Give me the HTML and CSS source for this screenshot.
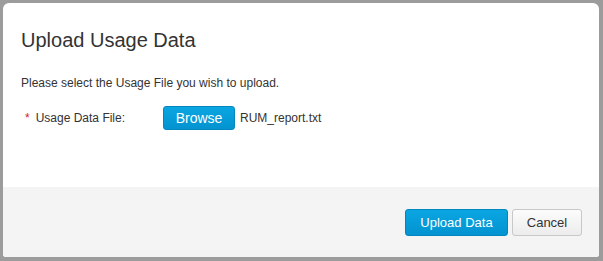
FILE: index.html
```html
<!DOCTYPE html>
<html lang="en">
<head>
    <meta charset="UTF-8">
    <meta name="viewport" content="width=device-width, initial-scale=1.0">
    <title>Upload Usage Data</title>
    <link rel="stylesheet" href="styles.css">
</head>
<body>
    <div class="modal">
        <!-- 內容區塊 -->
        <div class="modal-body">
            <h1 class="modal-title">Upload Usage Data</h1>
            <p class="hint">Please select the Usage File you wish to upload.</p>
            <div class="field">
                <label class="field-label"><span class="req">*</span>Usage Data File:</label>
                <button class="btn btn-primary btn-browse">Browse</button>
                <span class="file-name">RUM_report.txt</span>
            </div>
        </div>
        <!-- 按鈕區塊 -->
        <div class="modal-footer">
            <button class="btn btn-primary btn-upload">Upload Data</button>
            <button class="btn btn-default">Cancel</button>
        </div>
    </div>
</body>
</html>
```

FILE: styles.css
```css
html, body {
    margin: 0;
    height: 100%;
}

body {
    font-family: "Liberation Sans", Arial, Helvetica, sans-serif;
    color: #333;
    background-color: #9c9c9c;
    padding: 3px 4px 4px 3px;
    box-sizing: border-box;
}

.modal {
    display: flex;
    flex-direction: column;
    height: 100%;
    background-color: #fff;
    border-radius: 6px 6px 3px 3px;
    overflow: hidden;
}

.modal-body {
    flex: 1;
    padding: 0 18px;
}

.modal-title {
    margin: 25px 0 0;
    font-size: 20px;
    font-weight: normal;
    line-height: 24px;
    color: #333;
}

.hint {
    margin: 24px 0 0;
    font-size: 12px;
    line-height: 14px;
}

.field {
    display: flex;
    align-items: center;
    margin-top: 16px;
    font-size: 12px;
}

.field-label {
    width: 142px;
    padding-left: 4px;
    box-sizing: border-box;
}

.req {
    color: #cf2030;
    margin-right: 6px;
}

.btn {
    font-family: inherit;
    border-radius: 3px;
    cursor: pointer;
    padding: 0;
}

.btn-primary {
    background: linear-gradient(#0aa6e2, #0393d0);
    border: 1px solid #0385bd;
    color: #fff;
}

.btn-browse {
    width: 72px;
    height: 24px;
    font-size: 14px;
}

.file-name {
    margin-left: 5px;
}

.modal-footer {
    height: 70px;
    background-color: #f4f4f4;
    display: flex;
    justify-content: flex-end;
    align-items: flex-start;
    padding: 22px 17px 0 0;
    box-sizing: border-box;
    gap: 4px;
}

.btn-upload {
    width: 103px;
    height: 27px;
    font-size: 13px;
}

.btn-default {
    width: 70px;
    height: 27px;
    font-size: 13px;
    color: #333;
    background: linear-gradient(#fcfcfc, #ececec);
    border: 1px solid #c8c8c8;
}
```
